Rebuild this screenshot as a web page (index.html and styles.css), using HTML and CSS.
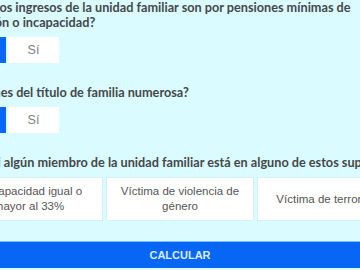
FILE: index.html
```html
<!DOCTYPE html>
<html lang="es">
<head>
  <meta charset="UTF-8">
  <meta name="viewport" content="width=device-width, initial-scale=1.0">
  <title>Calculadora</title>
<link rel="stylesheet" href="styles.css">
</head>
<body>
  <div class="form">
    <div class="question">
      <h2>¿Todos los ingresos de la unidad familiar son por pensiones mínimas de jubilación o incapacidad?</h2>
      <div class="toggle">
        <button class="opt active">No</button>
        <button class="opt">Sí</button>
      </div>
    </div>

    <div class="question">
      <h2>¿Dispones del título de familia numerosa?</h2>
      <div class="toggle">
        <button class="opt active">No</button>
        <button class="opt">Sí</button>
      </div>
    </div>

    <div class="question">
      <h2 class="single">Indica si algún miembro de la unidad familiar está en alguno de estos supuestos</h2>
      <div class="cards">
        <div class="card">Discapacidad igual o mayor al 33%</div>
        <div class="card">Víctima de violencia de género</div>
        <div class="card">Víctima de terrorismo</div>
      </div>
    </div>
  </div>
  <button class="calc">CALCULAR</button>
</body>
</html>
```

FILE: styles.css
```css
body { margin: 0; background: #dafbff; overflow: hidden; font-family: "Liberation Sans", Arial, sans-serif; }
.form { width: 450px; margin: 0 -45px; }
.question { margin-bottom: 22px; }
.question:last-child { margin-bottom: 20px; }
h2 { font-family: Lato, sans-serif; font-size: 12.7px; font-weight: 700; line-height: 15px; color: #45484b; margin: 0 0 7px; }
h2.single { white-space: nowrap; }
.toggle { display: flex; gap: 2px; }
.opt { width: 51px; height: 26px; border: none; background: #fff; color: #808080; font-family: "Liberation Sans", Arial, sans-serif; font-size: 12.5px; padding: 0; }
.opt.active { background: #0a66f7; color: #fff; }
.cards { display: flex; gap: 3px; }
.card { flex: 1; height: 44px; box-sizing: border-box; background: #fff; border: 1px solid #d3f2f6; display: flex; align-items: center; justify-content: center; text-align: center; padding: 0 12px; font-size: 11.5px; line-height: 15px; color: #555; }
.calc { display: block; width: 100%; height: 27px; border: none; border-top: 1px solid #7fc0ff; background: #0866f4; color: #dbeaff; font-family: "Liberation Sans", Arial, sans-serif; font-size: 11px; font-weight: 700; padding: 0; }
```
